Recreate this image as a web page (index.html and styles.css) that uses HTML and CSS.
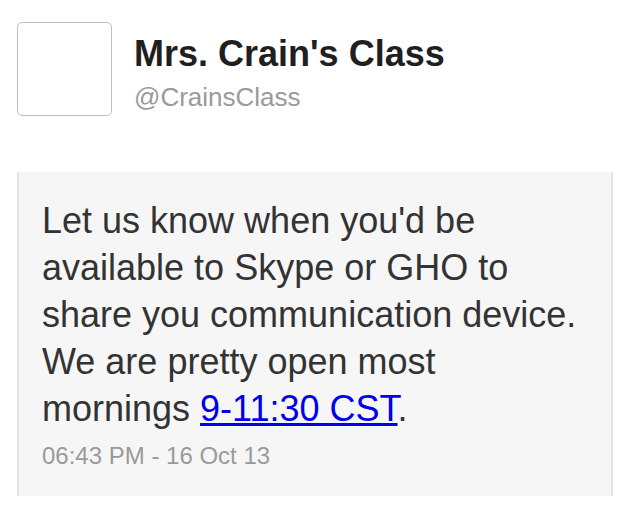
FILE: index.html
```html
<!DOCTYPE html>
<html lang="en">
<head>
<meta charset="utf-8">
<title>Mrs. Crain's Class</title>
<link rel="stylesheet" href="styles.css">
</head>
<body>
<div class="page">
  <header class="profile">
    <div class="avatar"></div>
    <div class="names">
      <div class="name">Mrs. Crain's Class</div>
      <div class="handle">@CrainsClass</div>
    </div>
  </header>
  <article class="tweet">
    <p class="text">Let us know when you'd be available to Skype or GHO to share you communication device. We are pretty open most mornings <a href="#">9-11:30 CST</a>.</p>
    <div class="time">06:43 PM - 16 Oct 13</div>
  </article>
</div>
</body>
</html>
```

FILE: styles.css
```css
html, body {
  margin: 0;
  padding: 0;
  background: #ffffff;
}

.page {
  width: 629px;
  padding: 22px 16px 0 17px;
  box-sizing: border-box;
  font-family: "Liberation Sans", Arial, sans-serif;
}

.profile {
  display: flex;
  align-items: flex-start;
  gap: 22px;
}

.avatar {
  width: 95px;
  height: 94px;
  box-sizing: border-box;
  border: 1.5px solid #bebebe;
  border-radius: 5px;
  background: #ffffff;
  flex: none;
}

.names {
  padding-top: 14px;
}

.name {
  font-size: 36px;
  line-height: 36px;
  font-weight: bold;
  color: #1f1f1f;
}

.handle {
  margin-top: 12px;
  font-size: 26px;
  line-height: 26px;
  color: #9a9a9a;
}

.tweet {
  margin-top: 56px;
  background: #f6f6f6;
  border-left: 2px solid #e3e3e3;
  border-right: 2px solid #e3e3e3;
  padding: 25px 20px 25px 23px;
}

.text {
  margin: 0;
  font-size: 36px;
  line-height: 47px;
  color: #333333;
}

.text a {
  color: #0000ee;
  text-decoration: underline;
}

.time {
  margin-top: 9px;
  font-size: 24px;
  line-height: 30px;
  color: #9a9a9a;
}
```
